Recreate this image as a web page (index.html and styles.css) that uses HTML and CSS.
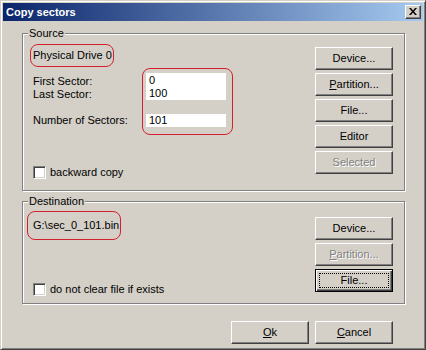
FILE: index.html
```html
<!DOCTYPE html>
<html>
<head>
<meta charset="utf-8">
<link rel="stylesheet" href="styles.css">
</head>
<body>
<div class="window">
  <div class="titlebar">
    <span class="title">Copy sectors</span>
    <span class="close"><svg width="8" height="7" viewBox="0 0 8 7"><path d="M0 0h2l2 2.5L6 0h2L5 3.5 8 7H6L4 4.5 2 7H0l3-3.5z" fill="#000"/></svg></span>
  </div>
  <div class="content">
    <div class="group src">
      <span class="legend">Source</span>
      <div class="col-left">
        <div class="mark drive">Physical Drive 0</div>
        <div class="sectors">
          <div class="labels">
            <div>First Sector:</div>
            <div>Last Sector:</div>
            <div class="gap">Number of Sectors:</div>
          </div>
          <div class="mark fields">
            <div class="field two"><div>0</div><div>100</div></div>
            <div class="field one">101</div>
          </div>
        </div>
        <div class="check src-check"><span class="box"></span>backward copy</div>
      </div>
      <div class="col-btns">
        <div class="btn">Device...</div>
        <div class="btn"><u>P</u>artition...</div>
        <div class="btn">File...</div>
        <div class="btn">Editor</div>
        <div class="btn disabled">Selected</div>
      </div>
    </div>
    <div class="group dst">
      <span class="legend">Destination</span>
      <div class="col-left">
        <div class="mark path">G:\sec_0_101.bin</div>
        <div class="check dst-check"><span class="box"></span>do not clear file if exists</div>
      </div>
      <div class="col-btns dst-btns">
        <div class="btn">Device...</div>
        <div class="btn disabled"><u>P</u>artition...</div>
        <div class="btn default">File...</div>
      </div>
    </div>
    <div class="footer">
      <div class="btn"><u>O</u>k</div>
      <div class="btn"><u>C</u>ancel</div>
    </div>
  </div>
</div>
</body>
</html>
```

FILE: styles.css
```css
* { box-sizing: border-box; }
html, body { margin: 0; padding: 0; }
body {
  background: #d4d0c8;
  font-family: "Liberation Sans", Arial, sans-serif;
  font-size: 11px;
  color: #000;
}
.window {
  width: 426px;
  height: 350px;
  background: #d4d0c8;
  border: 1px solid;
  border-color: #d4d0c8 #404040 #404040 #d4d0c8;
  box-shadow: inset 1px 1px 0 #fff, inset -1px -1px 0 #808080;
  padding: 2px;
}
.titlebar {
  height: 18px;
  background: linear-gradient(to right, #0a246a, #a6caf0);
  display: flex;
  align-items: center;
  justify-content: space-between;
  padding-left: 3px;
  padding-right: 2px;
}
.title {
  color: #fff;
  font-weight: bold;
  font-size: 11px;
  line-height: 18px;
}
.close {
  width: 16px;
  height: 14px;
  background: #d4d0c8;
  border: 1px solid;
  border-color: #fff #404040 #404040 #fff;
  box-shadow: inset -1px -1px 0 #808080;
  display: flex;
  align-items: center;
  justify-content: center;
  padding-bottom: 1px;
}
.content {
  padding-left: 19px;
}
.group {
  position: relative;
  width: 383px;
  border: 1px solid #808080;
  box-shadow: inset 1px 1px 0 #fff, 1px 1px 0 #fff;
  display: flex;
  justify-content: space-between;
  padding-right: 11px;
}
.src { margin-top: 12px; height: 158px; }
.dst { margin-top: 10px; height: 103px; }
.legend {
  position: absolute;
  left: 5px;
  top: -7px;
  padding: 0 1px;
  line-height: 13px;
  background: #d4d0c8;
}
.col-left {
  display: flex;
  flex-direction: column;
  align-items: flex-start;
}
.mark {
  border: 1px solid #d3202c;
  border-radius: 8px;
}
.drive {
  margin: 10px 0 0 7px;
  width: 84px;
  height: 23px;
  line-height: 21px;
  padding-left: 2px;
}
.sectors {
  display: flex;
  margin-top: 1px;
  margin-left: 10px;
}
.labels {
  width: 109px;
  padding-top: 7px;
  line-height: 13px;
}
.labels .gap { margin-top: 13px; }
.fields {
  width: 91px;
  height: 67px;
  padding: 4px 6px 0 3px;
}
.field {
  background: #fff;
  width: 80px;
  padding-left: 3px;
  line-height: 13px;
}
.field.two { height: 27px; padding-top: 1px; }
.field.one { height: 13px; margin-top: 14px; }
.check {
  display: flex;
  align-items: center;
  line-height: 13px;
  margin-left: 10px;
}
.src-check { margin-top: 31px; }
.box {
  width: 13px;
  height: 13px;
  background: #fff;
  border: 1px solid;
  border-color: #808080 #fff #fff #808080;
  box-shadow: inset 1px 1px 0 #404040, inset -1px -1px 0 #d4d0c8;
  margin-right: 4px;
}
.path {
  margin: 9px 0 0 4px;
  width: 94px;
  height: 29px;
  line-height: 27px;
  padding-left: 5px;
}
.dst-check { margin-top: 43px; }
.col-btns {
  display: flex;
  flex-direction: column;
  gap: 3px;
  margin-top: 13px;
}
.dst-btns { margin-top: 15px; }
.btn {
  position: relative;
  width: 78px;
  height: 23px;
  border: 1px solid;
  border-color: #fff #404040 #404040 #fff;
  box-shadow: inset -1px -1px 0 #808080;
  background: #d4d0c8;
  text-align: center;
  line-height: 20px;
}
.btn.disabled {
  color: #808080;
  text-shadow: 1px 1px 0 #fff;
}
.btn.default {
  border-color: #000;
  box-shadow: inset 1px 1px 0 #fff, inset -1px -1px 0 #404040, inset -2px -2px 0 #808080;
}
.btn.default::after {
  content: "";
  position: absolute;
  left: 3px;
  top: 3px;
  right: 3px;
  bottom: 3px;
  border: 1px dotted #000;
}
.footer {
  display: flex;
  gap: 6px;
  margin-top: 17px;
  padding-left: 209px;
}
```
